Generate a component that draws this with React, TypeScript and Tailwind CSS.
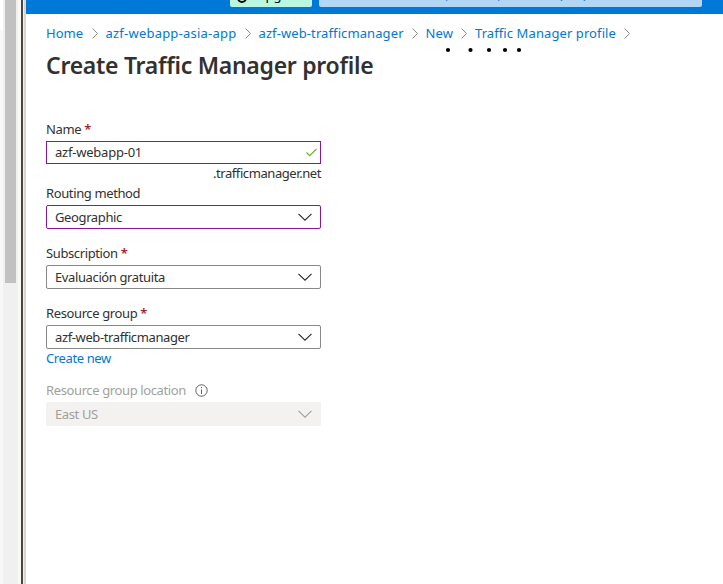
import React from 'react';

const crumbs = [
  { text: 'Home', style: 'w-[37.5px]' },
  { text: 'azf-webapp-asia-app', style: 'w-[131px] tracking-[0.22px]' },
  { text: 'azf-web-trafficmanager', style: 'w-[145px] tracking-[0.1px]' },
  { text: 'New', style: 'w-[27.5px] tracking-[0.1px]' },
  { text: 'Traffic Manager profile', style: 'w-[141px] tracking-[0.09px]' },
];

function Chevron({ muted = false }: { muted?: boolean }) {
  return (
    <svg className={muted ? 'text-[#a19f9d]' : 'text-[#292827]'} width="14" height="8" viewBox="0 0 14 8" fill="none" stroke="currentColor" strokeWidth="1.1">
      <path d="M0.5 0.8 7 7.2 13.5 0.8" />
    </svg>
  );
}

function Label({ text, required = false }: { text: string; required?: boolean }) {
  return (
    <div className="flex h-5 items-center whitespace-nowrap">
      {text}
      {required && <span className="ml-[3px] font-semibold text-[#a4262c]">*</span>}
    </div>
  );
}

function Select({ value, border }: { value: string; border: string }) {
  return (
    <div className={`flex h-6 w-[275px] items-center justify-between rounded-[2px] border pr-2 pl-2 ${border}`}>
      <span>{value}</span>
      <Chevron />
    </div>
  );
}

export default function App() {
  return (
    <div className="flex h-[584px] w-[723px] overflow-hidden bg-white font-['Noto_Sans','Open_Sans',sans-serif] text-[13px] leading-5 text-[#323130]">
      <div className="w-[3px] bg-[#f8f8f8]"><div className="h-[30px] bg-white" /></div>
      <div className="w-[15px] bg-[#f0f0f0] pl-[2px]"><div className="h-[283px] w-[11px] bg-[#c1c1c1]" /></div>
      <div className="w-[3px] bg-[#faf8f5]" />
      <div className="w-[2px] bg-[#4a4646]" />
      <div className="w-px bg-[#f3f1ee]" />
      <div className="w-[2px] bg-[#d9d6d1]" />
      <main className="min-w-0 flex-1">
        <header className="flex h-[14px] items-start bg-[#0078d7] pl-[204px]">
          <div className="flex h-[7px] w-[82px] items-end overflow-hidden rounded-b-[2px] bg-[#bbf6de] pl-[7px] text-black">
            <span className="mb-[2px] flex items-center gap-[9px]"><span className="mt-[5px] size-[10px] rounded-full border-2 border-black" />Upgrade</span>
          </div>
          <div className="ml-[7px] flex h-[7px] w-[383px] items-end overflow-hidden rounded-b-[2px] bg-[#b3d6f2] pl-[28px] text-[#0078d7]">
            <span className="mb-[3px] tracking-[-0.35px] whitespace-nowrap">Search resources, services, and docs (G+/)</span>
          </div>
        </header>
        <div className="relative pl-5">
          <nav className="flex h-10 items-center pb-[2px] whitespace-nowrap text-[#0078d4]">
            {crumbs.map((c) => (
              <React.Fragment key={c.text}>
                <span className={c.style}>{c.text}</span>
                <svg className="mx-2 shrink-0" width="6" height="11" viewBox="0 0 6 11" fill="none" stroke="#8a8886"><path d="M0.5 0.5 5.5 5.5 0.5 10.5" /></svg>
              </React.Fragment>
            ))}
          </nav>
          <svg className="absolute top-[33px] left-[419px]" width="78" height="6" fill="#000">
            <circle cx="3" cy="3" r="2.1" /><circle cx="25.5" cy="3" r="2.1" /><circle cx="44" cy="3" r="2.1" /><circle cx="60" cy="3" r="2.1" /><circle cx="74" cy="3" r="2.1" />
          </svg>
          <h1 className="-mt-[5px] h-8 text-[23px] leading-8 font-semibold tracking-[-0.28px] whitespace-nowrap">Create Traffic Manager profile</h1>
        </div>
        <form className="w-[295px] pt-[38px] pl-5 tracking-[-0.38px]">
          <Label text="Name" required />
          <div className="mt-[2px] flex h-[23px] w-[275px] items-center justify-between border border-[#881798] pr-[3px] pl-2">
            <span className="-mt-[2px] tracking-[-0.22px]">azf-webapp-01</span>
            <svg width="11" height="9" viewBox="0 0 11 9" fill="none" stroke="#6bb42c" strokeWidth="1.2"><path d="M0.5 4.5 3.7 7.7 10.5 1" /></svg>
          </div>
          <div className="-mt-px flex h-5 items-center justify-end tracking-[-0.42px]">.trafficmanager.net</div>
          <Label text="Routing method" />
          <div className="mt-[2px]"><Select value="Geographic" border="border-[#881798]" /></div>
          <div className="mt-[14px]"><Label text="Subscription" required /></div>
          <div className="mt-[2px]"><Select value="Evaluación gratuita" border="border-[#8a8886]" /></div>
          <div className="mt-[14px]"><Label text="Resource group" required /></div>
          <div className="mt-[2px]"><Select value="azf-web-trafficmanager" border="border-[#8a8886]" /></div>
          <div className="-mt-px h-5 text-[#0078d4]">Create new</div>
          <div className="mt-3 flex h-5 items-center gap-[9px] text-[#a19f9d]">
            <span>Resource group location</span>
            <svg width="13" height="13" viewBox="0 0 13 13" fill="none" stroke="#605e5c"><circle cx="6.5" cy="6.5" r="5.7" /><path d="M6.5 5.5V10M6.5 3V4.2" /></svg>
          </div>
          <div className="mt-[2px] flex h-6 w-[275px] items-center justify-between rounded-[2px] bg-[#f3f2f1] px-[9px] text-[#a19f9d]">
            <span>East US</span><Chevron muted />
          </div>
        </form>
      </main>
    </div>
  );
}
